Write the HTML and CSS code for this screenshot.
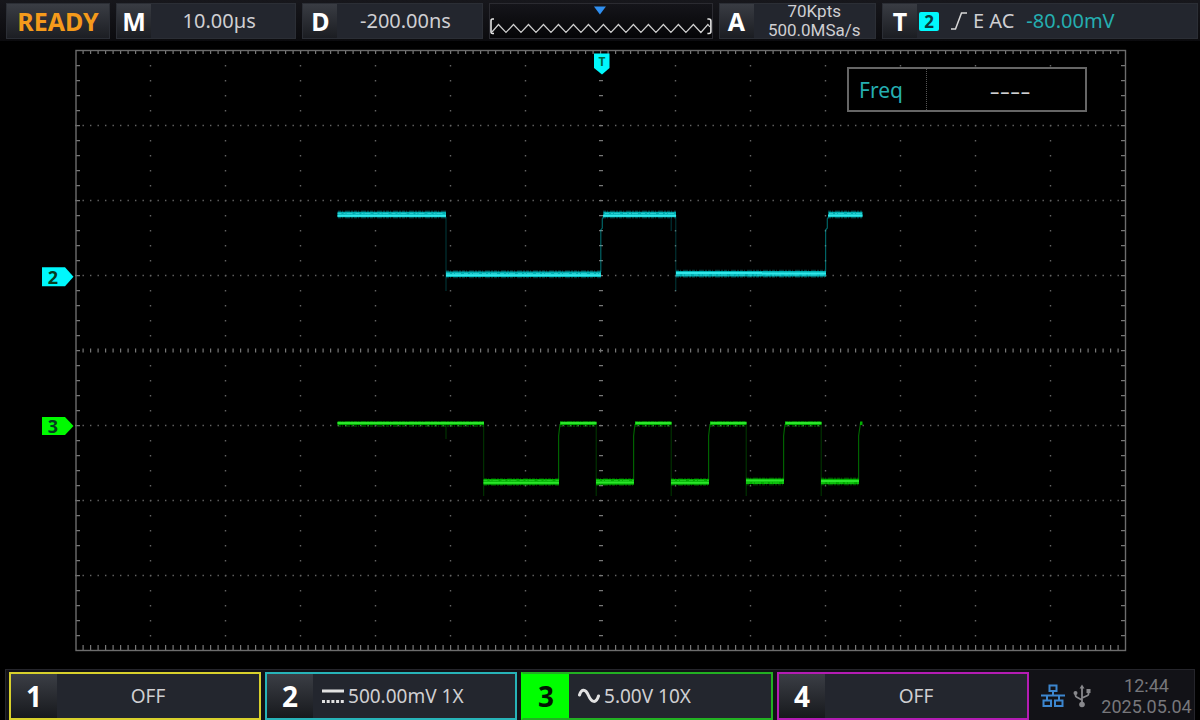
FILE: index.html
```html
<!DOCTYPE html>
<html lang="en">
<head>
<meta charset="utf-8">
<meta name="viewport" content="width=device-width, initial-scale=1">
<title>Oscilloscope</title>
<link rel="stylesheet" href="styles.css">
</head>
<body>
<header class="topbar">
  <div class="cell run-state">READY</div>
  <button class="cell timebase" type="button"><span class="key">M</span><span class="value">10.00µs</span></button>
  <button class="cell delay" type="button"><span class="key">D</span><span class="value">-200.00ns</span></button>
  <div class="overview">
    <svg viewBox="0 0 222 34" aria-hidden="true">
      <path d="M104 2.500H116L110 10.500Z" fill="#2f8ff0"/>
      <path class="memory" d="M2 28L8.500 20.500L16 28.500L23.500 20.500L31 28.500L38.500 20.500L46 28.500L53.500 20.500L61 28.500L68.500 20.500L76 28.500L83.500 20.500L91 28.500L98.500 20.500L106 28.500L113.500 20.500L121 28.500L128.500 20.500L136 28.500L143.500 20.500L151 28.500L158.500 20.500L166 28.500L173.500 20.500L181 28.500L188.500 20.500L196 28.500L203.500 20.500L211 28.500L218 20.500L220 23"/>
      <path class="bracket" d="M4 15H2.500Q1 15 1 17V27.500Q1 29.500 2.500 29.500H4M217.500 15H219Q221 15 221 17V27.500Q221 29.500 219 29.500H217.500"/>
    </svg>
  </div>
  <button class="cell acquire" type="button"><span class="key">A</span><span class="value stacked"><span>70Kpts</span><span>500.0MSa/s</span></span></button>
  <button class="cell trigger" type="button">
    <span class="key">T</span>
    <span class="source">2</span>
    <svg class="edge" viewBox="0 0 18 20" aria-hidden="true"><path d="M1 18H5.500L11.500 2H17"/></svg>
    <span class="mode">E AC</span>
    <span class="level">-80.00mV</span>
  </button>
</header>

<main class="screen">
  <svg class="plot" viewBox="0 41 1200 628" role="img" aria-label="Waveforms of channels 2 and 3">
    <g class="dots-h">
      <path d="M75 125.500H1125M75 200.500H1125M75 275.500H1125M75 425.500H1125M75 500.500H1125M75 575.500H1125"/>
    </g>
    <g class="dots-v">
      <path d="M150.500 50V650M225.500 50V650M300.500 50V650M375.500 50V650M450.500 50V650M525.500 50V650M675.500 50V650M750.500 50V650M825.500 50V650M900.500 50V650M975.500 50V650M1050.500 50V650"/>
    </g>
    <path class="ticks-x" stroke-width="4" d="M82.500 52H1125"/>
    <path class="ticks-x" stroke-width="5" d="M82.500 647.500H1125"/>
    <path class="ticks-x" stroke-width="4" d="M82.500 350.500H1125"/>
    <path class="ticks-y" stroke-width="4" d="M78 65V650M1123 65V650"/>
    <path class="ticks-y" stroke-width="4" d="M601 65V650"/>
    <rect class="frame" x="76" y="50.500" width="1049.500" height="600"/>

    <g class="trace trace-2">
      <path class="fall" d="M446 217V291M675.800 217V291M671.200 217V231"/>
      <path class="rise" d="M600.800 272V230L602.300 228V219L605 214M825.600 272V230L827.300 228V219L830 214"/>
      <path class="haze" d="M338 214.500H446M446 274.300H601M603 214.500H676M676 273.800H826M828 214.500H862"/>
      <path class="band" d="M337.500 214.500H446M446 274.300H601M603.500 214.500H676M676 273.800H826M828.500 214.500H862.500"/>
      <path class="core" d="M337.500 215.700H446M446 275.200H601M603 215.700H676M676 273H762M762 273.500H826M828 215.500H862.500"/>
      <path class="grain" d="M337.500 213.500H446M446 273.500H601M605 213.500H676M676 275H826M829 213.500H862"/>
    </g>
    <g class="trace trace-3">
      <path class="fall" d="M446 424V439M483.700 424V496M596.200 424V496M671.200 424V496M746.200 424V496M821.200 424V496"/>
      <path class="rise" d="M558.600 480V436L560 424M633.600 480V436L635 424M708.600 480V436L710 424M783.600 480V436L785 424M858.600 480V436L860.500 423L862 422"/>
      <path class="haze thin" d="M338 424H484M560 424H596M635 424H671M710 424H746M785 424H821"/>
      <path class="haze" d="M484 482H559M596 482H634M671 482H709M746 481.500H784M821 481.500H859"/>
      <path class="band thin" d="M337.500 423.300H484M560 423.300H596.500M635 423.300H671.500M710 423.300H746.500M785 423.300H821.500M860 423.300H862.500"/>
      <path class="band" d="M483.500 481.900H559M596 481.900H634M671 481.900H709M746 481.200H784M821 481.500H859"/>
      <path class="core" d="M337.500 423H484M560.500 423H596.500M635.500 423H671.500M710.500 423H746.500M785.500 423H821.500M483.500 482.700H559M596 482.500H634M671 482.700H709M746 480.500H784M821 481H859"/>
      <path class="grain" d="M483.500 480.500H559M596 480.500H634M671 480.500H709M746 483H784M821 483H859"/>
    </g>

    <path class="fill-2" d="M594 53.500H609.500V68L602 74.500L594 68Z"/>
    <text class="trigger-mark" x="602" y="66">T</text>
    <path class="fill-2" d="M42 267.200H65L73.500 276.700L65 286.200H42Z"/>
    <text class="marker" x="53" y="283.500">2</text>
    <path class="fill-3" d="M42 417H65L73.500 426L65 435H42Z"/>
    <text class="marker" x="53" y="432.500">3</text>
  </svg>
  <table class="measure">
    <tr><th scope="row">Freq</th><td>----</td></tr>
  </table>
</main>

<footer class="bottombar">
  <button class="channel ch1" type="button"><span class="number">1</span><span class="setting">OFF</span></button>
  <button class="channel ch2" type="button"><span class="number">2</span><span class="setting on">
    <svg class="coupling" viewBox="0 0 22 16" aria-label="DC"><path d="M0 3H22" stroke-width="3"/><path d="M0 13.500H22" stroke-width="3" stroke-dasharray="3 1.700"/></svg>500.00mV 1X</span></button>
  <button class="channel ch3" type="button"><span class="number">3</span><span class="setting on">
    <svg class="coupling" viewBox="0 0 22 16" aria-label="AC"><path d="M1.500 7C3.500 .5 7.500 .5 10.500 7.500S18 16 20.500 8" stroke-width="3" stroke-linecap="round"/></svg>5.00V 10X</span></button>
  <button class="channel ch4" type="button"><span class="number">4</span><span class="setting">OFF</span></button>
  <div class="status">
    <svg class="lan" viewBox="0 0 24 24" aria-label="Network"><path d="M8.500 1.500H15.500V7H8.500ZM12 7V11.500M0 11.500H24M6 11.500V16M18 11.500V16M2.500 16.500H10V22H2.500ZM14 16.500H21.500V22H14Z"/></svg>
    <svg class="usb" viewBox="0 0 18 24" aria-label="USB"><path d="M9 3V20M9 16L3.500 13Q2.500 12.500 2.500 11V9M9 14L14.500 11.500Q15.500 11 15.500 10V7"/><circle cx="9" cy="20.500" r="2.800"/><circle cx="2.500" cy="9" r="2"/><rect x="13.500" y="5" width="4" height="4"/><path class="tip" d="M6.500 4.500L9 .5L11.500 4.500Z"/></svg>
    <div class="clock"><time>12:44</time><time>2025.05.04</time></div>
  </div>
</footer>
</body>
</html>
```
FILE: styles.css
```css
:root {
  --panel: #23262e;
  --ch1: #d8d02c;
  --ch2: #27b3b8;
  --ch3: #22b022;
  --ch4: #b41cb4;
  --text: #cfcfd2;
}

* { box-sizing: border-box; }

body {
  margin: 0;
  min-height: 100vh;
  display: flex;
  flex-direction: column;
  background: #000;
  color: var(--text);
  font-family: "Noto Sans", "Open Sans", sans-serif;
  font-size: 20px;
  line-height: 24px;
}

button {
  margin: 0;
  padding: 0;
  border: 0;
  color: inherit;
  font: inherit;
  text-align: center;
}

/* Top bar */
.topbar {
  display: flex;
  gap: 6px;
  padding: 3px 2px 2px 6px;
  background: linear-gradient(#17171c, #0b0b0e);
}

.cell {
  display: flex;
  align-items: stretch;
  min-width: 0;
  height: 36px;
  border: 1px solid #2b2e35;
  background: var(--panel);
  white-space: nowrap;
}

.run-state {
  flex: 103 1 0;
  align-items: center;
  justify-content: center;
  background: linear-gradient(#3a3d44, #1c1e23);
  color: #f59a1b;
  font-size: 25px;
  font-weight: 700;
}

.timebase, .delay { flex: 180 1 0; }
.acquire { flex: 157 1 0; }
.trigger { flex: 317 1 0; align-items: center; }

.key {
  display: flex;
  flex: none;
  align-items: center;
  justify-content: center;
  width: 34px;
  height: 34px;
  background: linear-gradient(#393c43, #1b1d22);
  color: #fff;
  font-size: 25px;
  font-weight: 700;
}

.value {
  flex: 1;
  align-self: center;
  padding-right: 8px;
}

.stacked {
  display: flex;
  flex-direction: column;
  padding: 0;
  font-family: Roboto, "Noto Sans", sans-serif;
  font-size: 17px;
  line-height: 19px;
}

.overview {
  flex: 224 1 0;
  height: 36px;
  border: 1px solid #2b2b31;
  background: linear-gradient(#15151a, #050507);
}

.overview svg { display: block; width: 100%; height: 34px; }
.memory { fill: none; stroke: #cfcfcf; stroke-width: 1.2; }
.bracket { fill: none; stroke: #e4e4e4; stroke-width: 1.6; }

.source {
  width: 20px;
  margin-left: 2px;
  border-radius: 2px;
  background: #00f8fc;
  color: #073a3c;
  font-size: 17px;
  font-weight: 700;
  line-height: 19px;
}

.edge {
  width: 18px;
  height: 20px;
  margin: 0 5px 0 11px;
  fill: none;
  stroke: #d8d8d8;
  stroke-width: 1.5;
}

.level { margin-left: 12px; color: #25aeb0; }

/* Waveform screen */
.screen {
  position: relative;
  flex: 1;
}

.plot { display: block; width: 100%; height: auto; }
.plot path, .frame { fill: none; }
.dots-h { stroke: #636363; stroke-width: 1.4; stroke-dasharray: 1.4 6.1; }
.dots-v { stroke: #636363; stroke-width: 1.4; stroke-dasharray: 1.4 13.6; }
.ticks-x { stroke: #777; stroke-dasharray: 1.2 6.3; }
.ticks-y { stroke: #777; stroke-dasharray: 1.2 13.8; }
.frame { stroke: #6c6c6c; stroke-width: 1.4; }

.trace-2 { stroke: #00c5c9; }
.trace-3 { stroke: #00c400; }
.trace .fall { stroke-width: 1; opacity: .3; }
.trace .rise { stroke-width: 1.2; opacity: .5; }
.trace .haze { stroke-width: 8; stroke-dasharray: 3 1 1 2 5 1 2 1; opacity: .28; }
.trace .band { stroke-width: 5.6; opacity: .85; }
.trace .core { stroke-width: 2; }
.trace .grain { stroke-width: 1; stroke-dasharray: 4 2 2 1 6 3; opacity: .6; }
.trace-2 .core { stroke: #30e8ea; }
.trace-3 .core { stroke: #2be52b; }
.trace-2 .grain { stroke: #45dfe2; }
.trace-3 .grain { stroke: #30e030; }
.trace .haze.thin { stroke-width: 6; }
.trace .band.thin { stroke-width: 3.4; }

.plot .fill-2 { fill: #00f8fc; }
.plot .fill-3 { fill: #00fa00; }
.marker { fill: #053c20; font-size: 18px; font-weight: 700; text-anchor: middle; }
.trigger-mark { fill: #064; font-size: 12px; font-weight: 700; text-anchor: middle; }

.measure {
  position: absolute;
  top: 26px;
  right: 113px;
  width: 240px;
  height: 45px;
  border: 2px solid #666;
  border-collapse: separate;
  border-spacing: 0;
  background: #000;
}

.measure th {
  width: 78px;
  padding: 0 0 0 10px;
  border-right: 1px dotted #555;
  color: #25aeb0;
  font-size: 21px;
  font-weight: 400;
  text-align: left;
}

.measure td { padding: 0 0 0 8px; text-align: center; font-size: 32px; font-weight: 300; }

/* Channel bar */
.bottombar {
  display: flex;
  gap: 4px;
  margin: 0 5px;
  padding: 2px 0 0 3px;
  border: 1px solid #25252b;
  border-width: 1px 1px 0;
  background: #121217;
}

.channel {
  display: flex;
  flex: 253 1 0;
  min-width: 0;
  height: 48px;
  border: 2px solid;
  background: var(--panel);
  font-size: 19px;
  white-space: nowrap;
}

.ch1 { border-color: var(--ch1); }
.ch2 { border-color: var(--ch2); }
.ch3 { border-color: var(--ch3); }
.ch4 { border-color: var(--ch4); }

.number {
  display: flex;
  flex: none;
  align-items: center;
  justify-content: center;
  width: 46px;
  background: linear-gradient(#3b3e45, #17191d);
  color: #fff;
  font-size: 28px;
  font-weight: 700;
}

.ch3 .number { background: #0f0; color: #031503; }
.ch3 { border-left-color: #0f0; }

.setting {
  display: flex;
  flex: 1;
  align-items: center;
  justify-content: center;
  padding-right: 20px;
  color: var(--text);
}

.setting.on { justify-content: flex-start; gap: 4px; padding: 0 0 0 9px; }
.coupling { width: 22px; height: 16px; fill: none; stroke: #e2e2e2; }

.status {
  display: flex;
  flex: 156 1 0;
  align-items: center;
  min-width: 0;
  padding-left: 8px;
}

.lan { flex: none; width: 24px; height: 24px; fill: none; stroke: #3c86cf; stroke-width: 2; }
.usb { flex: none; width: 18px; height: 24px; margin-left: 8px; fill: #88888c; stroke: none; }
.usb path { fill: none; stroke: #88888c; stroke-width: 1.8; }
.usb .tip { fill: #88888c; stroke: none; }

.clock {
  display: flex;
  flex: 1;
  flex-direction: column;
  align-items: center;
  padding-left: 8px;
  color: #77777b;
  font-family: Roboto, "Noto Sans", sans-serif;
  font-size: 18px;
  line-height: 21px;
}
```
